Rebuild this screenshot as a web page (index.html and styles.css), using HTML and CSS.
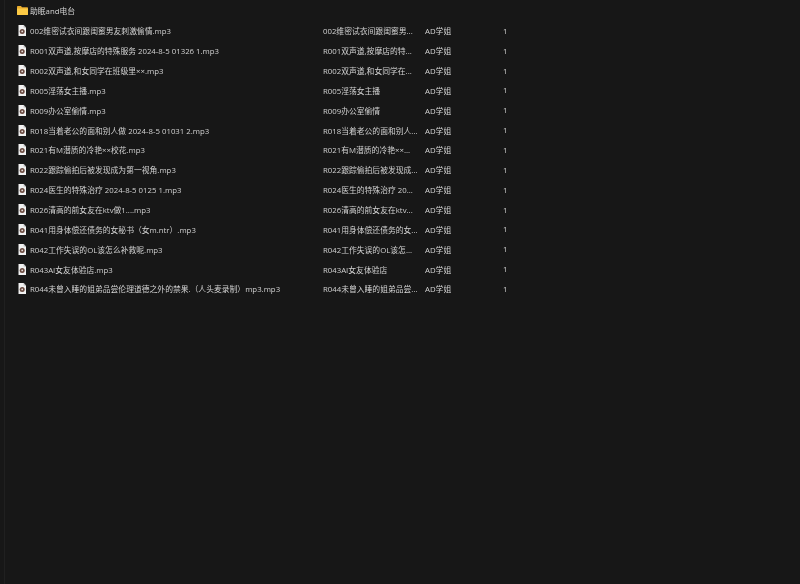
FILE: index.html
```html
<!DOCTYPE html>
<html lang="zh">
<head>
<meta charset="utf-8">
<title>助眠and电台</title>
<link rel="stylesheet" href="styles.css">
</head>
<body>
<svg class="defs" width="0" height="0" aria-hidden="true">
  <symbol id="audio" viewBox="0 0 8 11">
    <path d="M.5 0H5.6L8 2.4V11H.5Z" fill="#f2f2f2"/>
    <path d="M5.6 0V2.4H8Z" fill="#b9b9b9"/>
    <circle cx="4.2" cy="6.4" r="2.5" fill="#6a4a40"/>
    <circle cx="4.2" cy="6.4" r=".9" fill="#e8e0dc"/>
  </symbol>
</svg>
<main class="explorer">
  <div class="folder">
    <svg class="folder-icon" viewBox="0 0 11 9" aria-hidden="true">
      <path d="M0 1C0 .4.4 0 1 0H4L5 1.2H10C10.6 1.2 11 1.6 11 2.2V8C11 8.6 10.6 9 10 9H1C.4 9 0 8.6 0 8Z" fill="#e8ab2e"/>
      <path d="M0 2.4H11V8C11 8.6 10.6 9 10 9H1C.4 9 0 8.6 0 8Z" fill="#fcca45"/>
    </svg>
    <span>助眠and电台</span>
  </div>
  <div class="list">
    <div class="row"><svg class="file"><use href="#audio"/></svg><span class="name">002维密试衣间跟闺蜜男友刺激偷情.mp3</span><span class="title">002维密试衣间跟闺蜜男...</span><span class="artist">AD学姐</span><span class="num">1</span></div>
    <div class="row"><svg class="file"><use href="#audio"/></svg><span class="name">R001双声道,按摩店的特殊服务 2024-8-5 01326 1.mp3</span><span class="title">R001双声道,按摩店的特...</span><span class="artist">AD学姐</span><span class="num">1</span></div>
    <div class="row"><svg class="file"><use href="#audio"/></svg><span class="name">R002双声道,和女同学在班级里××.mp3</span><span class="title">R002双声道,和女同学在...</span><span class="artist">AD学姐</span><span class="num">1</span></div>
    <div class="row"><svg class="file"><use href="#audio"/></svg><span class="name">R005淫荡女主播.mp3</span><span class="title">R005淫荡女主播</span><span class="artist">AD学姐</span><span class="num">1</span></div>
    <div class="row"><svg class="file"><use href="#audio"/></svg><span class="name">R009办公室偷情.mp3</span><span class="title">R009办公室偷情</span><span class="artist">AD学姐</span><span class="num">1</span></div>
    <div class="row"><svg class="file"><use href="#audio"/></svg><span class="name">R018当着老公的面和别人做 2024-8-5 01031 2.mp3</span><span class="title">R018当着老公的面和别人...</span><span class="artist">AD学姐</span><span class="num">1</span></div>
    <div class="row"><svg class="file"><use href="#audio"/></svg><span class="name">R021有M潜质的冷艳××校花.mp3</span><span class="title">R021有M潜质的冷艳××...</span><span class="artist">AD学姐</span><span class="num">1</span></div>
    <div class="row"><svg class="file"><use href="#audio"/></svg><span class="name">R022跟踪偷拍后被发现成为第一视角.mp3</span><span class="title">R022跟踪偷拍后被发现成...</span><span class="artist">AD学姐</span><span class="num">1</span></div>
    <div class="row"><svg class="file"><use href="#audio"/></svg><span class="name">R024医生的特殊治疗 2024-8-5 0125 1.mp3</span><span class="title">R024医生的特殊治疗 20...</span><span class="artist">AD学姐</span><span class="num">1</span></div>
    <div class="row"><svg class="file"><use href="#audio"/></svg><span class="name">R026清高的前女友在ktv做1....mp3</span><span class="title">R026清高的前女友在ktv...</span><span class="artist">AD学姐</span><span class="num">1</span></div>
    <div class="row"><svg class="file"><use href="#audio"/></svg><span class="name">R041用身体偿还债务的女秘书（女m.ntr）.mp3</span><span class="title">R041用身体偿还债务的女...</span><span class="artist">AD学姐</span><span class="num">1</span></div>
    <div class="row"><svg class="file"><use href="#audio"/></svg><span class="name">R042工作失误的OL该怎么补救呢.mp3</span><span class="title">R042工作失误的OL该怎...</span><span class="artist">AD学姐</span><span class="num">1</span></div>
    <div class="row"><svg class="file"><use href="#audio"/></svg><span class="name">R043AI女友体验店.mp3</span><span class="title">R043AI女友体验店</span><span class="artist">AD学姐</span><span class="num">1</span></div>
    <div class="row"><svg class="file"><use href="#audio"/></svg><span class="name">R044未曾入睡的姐弟品尝伦理道德之外的禁果.（人头麦录制）mp3.mp3</span><span class="title">R044未曾入睡的姐弟品尝...</span><span class="artist">AD学姐</span><span class="num">1</span></div>
  </div>
</main>
</body>
</html>
```
FILE: styles.css
```css
html, body {
  margin: 0;
  height: 100%;
  background: #171717;
}
body {
  overflow: hidden;
  font-family: "Open Sans", "Noto Sans CJK SC", sans-serif;
  font-size: 7.8px;
  color: #d2d2d2;
}
.defs {
  display: block;
  height: 0;
}
.explorer {
  height: 584px;
  box-sizing: border-box;
  margin-left: 4px;
  padding: 5px 0 0 12px;
  border-left: 1px solid #202020;
  filter: blur(0.35px);
}
.folder {
  display: flex;
  align-items: center;
  gap: 2px;
  height: 11px;
  margin-bottom: 5px;
}
.folder-icon {
  width: 11px;
  height: 9px;
}
.list {
  display: flex;
  flex-direction: column;
}
.row {
  display: grid;
  grid-template-columns: 13px 293px 102px 78px 10px;
  align-items: center;
  height: 19.85px;
  white-space: nowrap;
}
.file {
  width: 8px;
  height: 11px;
  margin-left: 1px;
}
```
